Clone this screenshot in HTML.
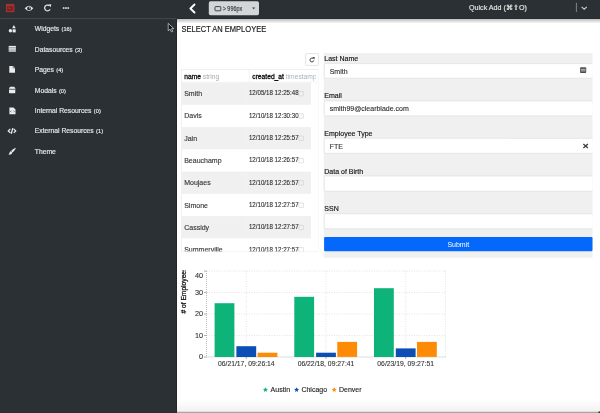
<!DOCTYPE html>
<html><head><meta charset="utf-8">
<title>Employee Portal</title>
<style>
*{box-sizing:border-box;margin:0;padding:0}
html,body{width:600px;height:413px;overflow:hidden;background:#fff;font-family:"Liberation Sans",sans-serif}
svg{position:absolute;left:0;top:0;will-change:transform}
text{font-family:"Liberation Sans",sans-serif}
</style></head><body>
<svg width="600" height="413" viewBox="0 0 600 413">
<defs>
  <clipPath id="tbl"><rect x="181" y="69" width="137.5" height="182.7"/></clipPath>
  <clipPath id="hdr2"><rect x="250" y="69" width="66" height="13"/></clipPath>
  <clipPath id="ylab"><rect x="175" y="270.3" width="15" height="60"/></clipPath>
  <linearGradient id="topsh" x1="0" y1="0" x2="0" y2="1">
    <stop offset="0" stop-color="#000" stop-opacity="0.28"/>
    <stop offset="1" stop-color="#000" stop-opacity="0"/>
  </linearGradient>
  <linearGradient id="botsh" x1="0" y1="0" x2="0" y2="1">
    <stop offset="0" stop-color="#000" stop-opacity="0"/>
    <stop offset="1" stop-color="#000" stop-opacity="0.05"/>
  </linearGradient>
  <linearGradient id="botline" x1="0" y1="0" x2="0" y2="1">
    <stop offset="0" stop-color="#e6e6e6"/>
    <stop offset="1" stop-color="#8c8c8c"/>
  </linearGradient>
  <clipPath id="formclip"><rect x="320" y="50" width="272.5" height="200"/></clipPath>
</defs>

<!-- ============ TOP BAR ============ -->
<rect x="0" y="0" width="600" height="19" fill="#2a3033"/>
<!-- logo -->
<rect x="5.9" y="3.9" width="8.5" height="8.3" fill="#ad2d2c"/>
<rect x="7.2" y="6.3" width="5.9" height="4.6" fill="#5e2a2a"/>
<path d="M8.2 6.6 L12.3 10.6 M7.6 8.4 L10.6 8.4" stroke="#ad2d2c" stroke-width="0.9"/>
<rect x="14.2" y="7.6" width="1" height="1.6" fill="#8a2b2b"/>
<!-- eye -->
<path d="M24.7 8.3 Q29 3 33.3 8.3 Q29 13.6 24.7 8.3 Z" fill="#e8e8e8"/>
<circle cx="29" cy="8.4" r="1.9" fill="#2a3033"/>
<circle cx="29.6" cy="7.8" r="0.6" fill="#e8e8e8"/>
<!-- refresh -->
<path d="M50.1 9.3 A2.9 2.9 0 1 1 49.2 5.6" fill="none" stroke="#e0e0e0" stroke-width="1.3"/>
<path d="M48.3 4.5 L51.2 4.3 L50.8 7.3 Z" fill="#e8e8e8"/>
<!-- dots -->
<g fill="#d8d8d8"><rect x="62.8" y="7.2" width="1.7" height="1.7"/><rect x="65.1" y="7.2" width="1.7" height="1.7"/><rect x="67.4" y="7.2" width="1.7" height="1.7"/></g>
<!-- back chevron -->
<path d="M194.5 4.5 L190.4 8.5 L194.5 12.5" fill="none" stroke="#fff" stroke-width="1.9" stroke-linecap="round" stroke-linejoin="round"/>
<!-- dropdown -->
<rect x="208.8" y="1.2" width="50.2" height="14.1" rx="1.8" fill="#d3d6d9"/>
<rect x="215" y="6.6" width="5.8" height="4.2" rx="0.6" fill="none" stroke="#333" stroke-width="0.9"/>
<text x="222.7" y="11" font-size="6.4" fill="#333" stroke="#333" stroke-width="0.12" textLength="19.5" lengthAdjust="spacingAndGlyphs">&gt; 996px</text>
<path d="M252 7.4 L255.4 7.4 L253.7 9.3 Z" fill="#444"/>
<!-- quick add -->
<text x="469" y="10.4" font-size="7.15" fill="#e6e6e6" stroke="#e6e6e6" stroke-width="0.15">Quick Add (&#8984;&#8679;O)</text>
<line x1="576.4" y1="2.7" x2="576.4" y2="12" stroke="#8a8e92" stroke-width="0.9"/>
<path d="M581.6 6.9 L584.2 9.2 L586.8 6.9" fill="none" stroke="#d0d0d0" stroke-width="1.1"/>

<!-- ============ SIDEBAR ============ -->
<rect x="0" y="19" width="177" height="394" fill="#2a3033"/>
<rect x="0" y="18.2" width="176.5" height="0.9" fill="#474b4f"/>
<rect x="176.2" y="19" width="0.8" height="394" fill="#212428"/>
<g fill="#e4e5e6" font-size="6.75" stroke="#e4e5e6" stroke-width="0.18">
  <text x="34.8" y="31.3">Widgets <tspan font-size="5.7" dx="0.5">(16)</tspan></text>
  <text x="34.8" y="51.8">Datasources <tspan font-size="5.7" dx="0.5">(3)</tspan></text>
  <text x="34.8" y="72.2">Pages <tspan font-size="5.7" dx="0.5">(4)</tspan></text>
  <text x="34.8" y="92.6">Modals <tspan font-size="5.7" dx="0.5">(0)</tspan></text>
  <text x="34.8" y="113">Internal Resources <tspan font-size="5.7" dx="0.5">(0)</tspan></text>
  <text x="34.8" y="133.4">External Resources <tspan font-size="5.7" dx="0.5">(1)</tspan></text>
  <text x="34.8" y="153.8">Theme</text>
</g>
<g fill="#ececec">
  <!-- widgets -->
  <path d="M13.9 25.1 L12.1 28.3 L15.7 28.3 Z"/>
  <circle cx="10.4" cy="30.8" r="1.7"/>
  <rect x="12.6" y="29.3" width="3.1" height="3.1"/>
  <!-- datasources -->
  <rect x="8.7" y="45.9" width="7.2" height="5.8"/>
  <!-- pages -->
  <path d="M9.3 66.1 L13.1 66.1 L15 68 L15 72.7 L9.3 72.7 Z"/>
  <!-- modals -->
  <path d="M10 86.8 L14.3 86.8 L15.3 88.6 L15.3 92.6 Q15.3 93.3 14.6 93.3 L9.7 93.3 Q9 93.3 9 92.6 L9 88.6 Z"/>
  <!-- internal res -->
  <path d="M9.4 107.4 L13.4 107.4 L15.5 109.5 L15.5 114.2 L9.4 114.2 Z"/>
  <!-- brush -->
  <path d="M16 147.8 Q15 150.6 12.6 152.6 L11 151 Q13 148.8 16 147.8 Z"/>
  <path d="M10.8 151.2 L12.4 152.8 Q12 155 8.5 154.8 Q9.4 153.9 9.5 152.8 Q9.8 151.5 10.8 151.2 Z"/>
</g>
<g stroke="#6e7174" stroke-width="0.55">
  <line x1="8.7" y1="47.5" x2="15.9" y2="47.5"/>
  <line x1="8.7" y1="49" x2="15.9" y2="49"/>
  <line x1="8.7" y1="50.4" x2="15.9" y2="50.4"/>
</g>
<g stroke="#2a3033" stroke-width="0.7">
  <line x1="9" y1="89.3" x2="15.3" y2="89.3"/>
  <path d="M11.3 110.6 L10.6 111.4 L11.3 112.2 M13.6 110.6 L14.3 111.4 L13.6 112.2" fill="none" stroke-width="0.6"/>
  <path d="M13.1 66.1 L13.1 68 L15 68" fill="none" stroke-width="0.5"/>
</g>
<path d="M10.3 128.9 L8.3 130.9 L10.3 132.9 M13.7 128.9 L15.7 130.9 L13.7 132.9 M12.8 128.1 L11.2 133.7" fill="none" stroke="#ececec" stroke-width="1.3"/>

<!-- ============ MAIN ============ -->
<rect x="177" y="19" width="423" height="394" fill="#fff"/>
<rect x="177" y="18.6" width="423" height="5" fill="url(#topsh)"/>
<!-- cursor -->
<path d="M168.2 23.4 L168.2 30.8 L170.1 29.2 L171.5 32 L172.8 31.4 L171.5 28.7 L173.8 28.6 Z" fill="#111" stroke="#c8c8c8" stroke-width="0.8" stroke-linejoin="round"/>

<text x="181.5" y="31.7" font-size="8.6" fill="#151515" stroke="#151515" stroke-width="0.15" textLength="84.7" lengthAdjust="spacingAndGlyphs">SELECT AN EMPLOYEE</text>

<!-- refresh button -->
<rect x="305.6" y="53.6" width="12.9" height="11.8" rx="1.2" fill="#fff" stroke="#d9d9d9" stroke-width="0.7"/>
<path d="M313.75 60.4 A1.9 1.9 0 1 1 312.8 58.3" fill="none" stroke="#333" stroke-width="0.95"/>
<path d="M312.2 57.2 L314.7 57.0 L314.3 59.6 Z" fill="#333"/>

<!-- table -->
<g clip-path="url(#tbl)">
  <rect x="181.3" y="69.3" width="137" height="200" fill="#fff" stroke="#e6e6e6" stroke-width="0.6"/>
  <line x1="249.3" y1="69.3" x2="249.3" y2="82" stroke="#ececec" stroke-width="0.6"/>
  <line x1="181.3" y1="82.2" x2="318.3" y2="82.2" stroke="#ededed" stroke-width="0.6"/>
  <g fill="#f0f0f0">
    <rect x="181.6" y="82.6" width="129.4" height="22.2"/>
    <rect x="181.6" y="127.1" width="129.4" height="22.2"/>
    <rect x="181.6" y="171.6" width="129.4" height="22.2"/>
    <rect x="181.6" y="216.1" width="129.4" height="22.2"/>
  </g>
  <g stroke="#f6f6f6" stroke-width="0.5">
    <line x1="246" y1="82.6" x2="246" y2="104.8"/>
    <line x1="246" y1="127.1" x2="246" y2="149.3"/>
    <line x1="246" y1="171.6" x2="246" y2="193.8"/>
    <line x1="246" y1="216.1" x2="246" y2="238.3"/>
  </g>
  <text x="184.2" y="78.5" font-size="6.7" fill="#111"><tspan stroke="#111" stroke-width="0.3">name</tspan> <tspan fill="#a8a8a8">string</tspan></text>
  <g clip-path="url(#hdr2)">
    <text x="252.3" y="78.5" font-size="6.7" fill="#111"><tspan stroke="#111" stroke-width="0.3">created_at</tspan> <tspan fill="#a9b4bb">timestamp</tspan></text>
  </g>
  <g font-size="7" fill="#333" stroke="#333" stroke-width="0.12">
    <text x="184.2" y="96.00">Smith</text>
    <text x="184.2" y="118.30">Davis</text>
    <text x="184.2" y="140.60">Jain</text>
    <text x="184.2" y="162.90">Beauchamp</text>
    <text x="184.2" y="185.20">Moujaes</text>
    <text x="184.2" y="207.50">Simone</text>
    <text x="184.2" y="229.80">Cassidy</text>
    <text x="184.2" y="252.10">Summerville</text>
  </g>
  <g font-size="6.4" fill="#2a2a2a" stroke="#2a2a2a" stroke-width="0.1">
    <text x="248.9" y="95.40" textLength="49.7" lengthAdjust="spacingAndGlyphs">12/05/18 12:25:48</text>
    <text x="248.9" y="117.70" textLength="49.7" lengthAdjust="spacingAndGlyphs">12/10/18 12:30:30</text>
    <text x="248.9" y="140.00" textLength="49.7" lengthAdjust="spacingAndGlyphs">12/10/18 12:25:57</text>
    <text x="248.9" y="162.30" textLength="49.7" lengthAdjust="spacingAndGlyphs">12/10/18 12:26:57</text>
    <text x="248.9" y="184.60" textLength="49.7" lengthAdjust="spacingAndGlyphs">12/10/18 12:26:57</text>
    <text x="248.9" y="206.90" textLength="49.7" lengthAdjust="spacingAndGlyphs">12/10/18 12:27:57</text>
    <text x="248.9" y="229.20" textLength="49.7" lengthAdjust="spacingAndGlyphs">12/10/18 12:27:57</text>
    <text x="248.9" y="251.50" textLength="49.7" lengthAdjust="spacingAndGlyphs">12/10/18 12:27:57</text>
  </g>
  <g fill="none" stroke="#cfcfcf" stroke-width="0.6">
    <rect x="298.8" y="91.50" width="4.6" height="4.4" rx="0.3"/>
    <rect x="298.8" y="113.80" width="4.6" height="4.4" rx="0.3"/>
    <rect x="298.8" y="136.10" width="4.6" height="4.4" rx="0.3"/>
    <rect x="298.8" y="158.40" width="4.6" height="4.4" rx="0.3"/>
    <rect x="298.8" y="180.70" width="4.6" height="4.4" rx="0.3"/>
    <rect x="298.8" y="203.00" width="4.6" height="4.4" rx="0.3"/>
    <rect x="298.8" y="225.30" width="4.6" height="4.4" rx="0.3"/>
    <rect x="298.8" y="247.60" width="4.6" height="4.4" rx="0.3"/>
  </g>
</g>
<line x1="181.3" y1="251.7" x2="318.3" y2="251.7" stroke="#eeeeee" stroke-width="0.6"/>

<!-- form -->
<rect x="323.7" y="53" width="268.8" height="204.7" fill="#f0f0f0"/>
<g font-size="7" fill="#151515" stroke="#151515" stroke-width="0.15">
  <text x="324.3" y="60.7">Last Name</text>
  <text x="324.3" y="98.4">Email</text>
  <text x="324.3" y="136.2">Employee Type</text>
  <text x="324.3" y="173.6">Data of Birth</text>
  <text x="324.3" y="211.4">SSN</text>
</g>
<g fill="#fff" stroke="#dcdfe2" stroke-width="0.7" clip-path="url(#formclip)">
  <rect x="324.2" y="63.6" width="272" height="14.6" rx="1.5"/>
  <rect x="324.2" y="100.9" width="272" height="15" rx="1.5"/>
  <rect x="324.2" y="138.3" width="272" height="15" rx="1.5"/>
  <rect x="324.2" y="176" width="272" height="15.3" rx="1.5"/>
  <rect x="324.2" y="213.7" width="272" height="15.1" rx="1.5"/>
</g>
<g font-size="7" fill="#2a2a2a" stroke="#2a2a2a" stroke-width="0.1">
  <text x="329.7" y="74">Smith</text>
  <text x="329.7" y="111.2">smith99@clearblade.com</text>
  <text x="329.7" y="148.6">FTE</text>
</g>
<!-- field icon -->
<rect x="580" y="67.2" width="6.2" height="5.8" rx="1" fill="#4a4a4a"/>
<line x1="580.6" y1="69.3" x2="585.6" y2="69.3" stroke="#fff" stroke-width="0.65"/>
<line x1="580.6" y1="70.9" x2="585.6" y2="70.9" stroke="#fff" stroke-width="0.65"/>
<!-- clear x -->
<path d="M583.4 144 L587.9 148 M587.9 144 L583.4 148" stroke="#3a3a3a" stroke-width="1.3"/>
<!-- submit -->
<rect x="324.1" y="237.1" width="268.4" height="14.2" rx="1.2" fill="#0468fd"/>
<text x="458.3" y="246.6" font-size="7" fill="#fff" text-anchor="middle">Submit</text>

<!-- ============ CHART ============ -->
<g id="chart">
<line x1="206.5" y1="335.5" x2="445.5" y2="335.5" stroke="#d8d8d8" stroke-width="0.7" stroke-dasharray="1,1.5"/>
<line x1="206.5" y1="314.0" x2="445.5" y2="314.0" stroke="#d8d8d8" stroke-width="0.7" stroke-dasharray="1,1.5"/>
<line x1="206.5" y1="292.5" x2="445.5" y2="292.5" stroke="#d8d8d8" stroke-width="0.7" stroke-dasharray="1,1.5"/>
<line x1="206.5" y1="271.0" x2="445.5" y2="271.0" stroke="#d8d8d8" stroke-width="0.7" stroke-dasharray="1,1.5"/>
<line x1="246.3" y1="271.0" x2="246.3" y2="357" stroke="#d8d8d8" stroke-width="0.7" stroke-dasharray="1,1.5"/>
<line x1="326.0" y1="271.0" x2="326.0" y2="357" stroke="#d8d8d8" stroke-width="0.7" stroke-dasharray="1,1.5"/>
<line x1="405.7" y1="271.0" x2="405.7" y2="357" stroke="#d8d8d8" stroke-width="0.7" stroke-dasharray="1,1.5"/>
<line x1="445.5" y1="271.0" x2="445.5" y2="357" stroke="#d8d8d8" stroke-width="0.7" stroke-dasharray="1,1.5"/>
<line x1="206.5" y1="271.0" x2="206.5" y2="357" stroke="#aaa" stroke-width="0.8" stroke-dasharray="1,1"/>
<line x1="206.5" y1="357" x2="445.5" y2="357" stroke="#aaa" stroke-width="0.8" stroke-dasharray="1,1"/>
<line x1="204.0" y1="357.0" x2="206.5" y2="357.0" stroke="#999" stroke-width="0.8"/>
<line x1="204.0" y1="335.5" x2="206.5" y2="335.5" stroke="#999" stroke-width="0.8"/>
<line x1="204.0" y1="314.0" x2="206.5" y2="314.0" stroke="#999" stroke-width="0.8"/>
<line x1="204.0" y1="292.5" x2="206.5" y2="292.5" stroke="#999" stroke-width="0.8"/>
<line x1="204.0" y1="271.0" x2="206.5" y2="271.0" stroke="#999" stroke-width="0.8"/>
<rect x="214.6" y="303.2" width="19.8" height="53.8" fill="#0eb37a"/>
<rect x="236.4" y="346.2" width="19.8" height="10.8" fill="#0b4fb6"/>
<rect x="257.6" y="352.7" width="19.8" height="4.3" fill="#fd8b06"/>
<line x1="246.3" y1="357" x2="246.3" y2="359" stroke="#999" stroke-width="0.8"/>
<rect x="294.3" y="296.8" width="19.8" height="60.2" fill="#0eb37a"/>
<rect x="316.1" y="352.7" width="19.8" height="4.3" fill="#0b4fb6"/>
<rect x="337.3" y="341.9" width="19.8" height="15.0" fill="#fd8b06"/>
<line x1="326.0" y1="357" x2="326.0" y2="359" stroke="#999" stroke-width="0.8"/>
<rect x="374.0" y="288.2" width="19.8" height="68.8" fill="#0eb37a"/>
<rect x="395.8" y="348.4" width="19.8" height="8.6" fill="#0b4fb6"/>
<rect x="417.0" y="341.9" width="19.8" height="15.0" fill="#fd8b06"/>
<line x1="405.7" y1="357" x2="405.7" y2="359" stroke="#999" stroke-width="0.8"/>
<text x="246.3" y="365.5" text-anchor="middle" font-size="6.8" fill="#333" stroke="#333" stroke-width="0.1">06/21/17, 09:26:14</text>
<text x="326.0" y="365.5" text-anchor="middle" font-size="6.8" fill="#333" stroke="#333" stroke-width="0.1">06/22/18, 09:27:41</text>
<text x="405.7" y="365.5" text-anchor="middle" font-size="6.8" fill="#333" stroke="#333" stroke-width="0.1">06/23/19, 09:27:51</text>
<text x="203" y="359.2" text-anchor="end" font-size="7.3" fill="#333" stroke="#333" stroke-width="0.1">0</text>
<text x="203" y="337.8" text-anchor="end" font-size="7.3" fill="#333" stroke="#333" stroke-width="0.1">10</text>
<text x="203" y="316.1" text-anchor="end" font-size="7.3" fill="#333" stroke="#333" stroke-width="0.1">20</text>
<text x="203" y="294.6" text-anchor="end" font-size="7.3" fill="#333" stroke="#333" stroke-width="0.1">30</text>
<text x="203" y="277.8" text-anchor="end" font-size="7.3" fill="#333" stroke="#333" stroke-width="0.1">40</text>
<g clip-path="url(#ylab)"><text transform="translate(185.5,313.6) rotate(-90)" font-size="7" fill="#111" stroke="#111" stroke-width="0.25" textLength="46" lengthAdjust="spacingAndGlyphs"># of Employees</text></g>
<polygon points="265.40,387.20 266.09,388.85 267.87,389.00 266.51,390.16 266.93,391.90 265.40,390.97 263.87,391.90 264.29,390.16 262.93,389.00 264.71,388.85" fill="#0eb37a"/>
<polygon points="296.60,387.20 297.29,388.85 299.07,389.00 297.71,390.16 298.13,391.90 296.60,390.97 295.07,391.90 295.49,390.16 294.13,389.00 295.91,388.85" fill="#0b4fb6"/>
<polygon points="334.20,387.20 334.89,388.85 336.67,389.00 335.31,390.16 335.73,391.90 334.20,390.97 332.67,391.90 333.09,390.16 331.73,389.00 333.51,388.85" fill="#fd8b06"/>
<g font-size="7" fill="#222" stroke="#222" stroke-width="0.12"><text x="270.6" y="392.3">Austin</text><text x="301.4" y="392.3">Chicago</text><text x="339" y="392.3">Denver</text></g>
</g>

<!-- bottom shadow -->
<rect x="177" y="400" width="423" height="11" fill="url(#botsh)"/>
<rect x="177" y="411.2" width="423" height="1.8" fill="url(#botline)"/>
<rect x="598.6" y="411.5" width="1.4" height="1.5" fill="#222"/>
</svg>
</body></html>
